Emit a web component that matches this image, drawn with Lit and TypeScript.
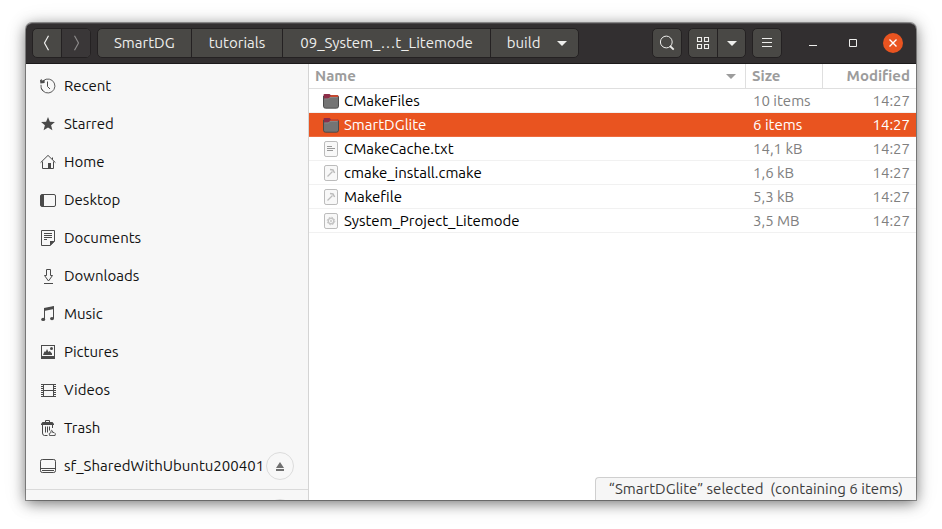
import { LitElement, html, css, svg, nothing } from "lit";
import { customElement } from "lit/decorators.js";
import { classMap } from "lit/directives/class-map.js";

const glyphs: Record<string, unknown> = {
  recent: svg`<path d="M3.2 2.8A7 7 0 1 1 1 6.8M1.3 10.2A7 7 0 0 0 3 13" fill="none" stroke="currentColor" stroke-width=".9"/><path d="M0 2.2 1.8 1v1.6L4.6 2v3L.4 5.4z" fill="currentColor"/><path d="M7.5 3.5v5L10 11" fill="none" stroke="currentColor"/>`,
  star: svg`<path d="M8 1l1.9 4.7 5 .4-3.8 3.2 1.3 4.9L8 11.5l-4.4 2.7 1.3-4.9L1.1 6.1l5-.4z" fill="currentColor"/>`,
  home: svg`<path d="M.6 8.6 8 1.4l7.4 7.2M2.5 7.5v7h11v-7M12.5 5.5v-2" fill="none" stroke="currentColor"/><path d="M8 9h3v6H8z" fill="currentColor"/>`,
  desktop: svg`<rect x=".5" y="2.5" width="15" height="12" rx="1.5" fill="none" stroke="currentColor"/><path d="M1 3h3v11H1z" fill="currentColor"/>`,
  documents: svg`<path d="M1.5.5h13v10.6l-4.4 4.4H1.5z" fill="none" stroke="currentColor"/><path d="M10 16v-5h5zM4 3h8v1H4zM4 5h8v1H4zM4 7h8v1H4zM4 9h3v1H4z" fill="currentColor"/>`,
  downloads: svg`<path d="M6.5 1.5h4v6h2L8.5 13 4.5 7.5h2zM4 15.5h9" fill="none" stroke="currentColor"/>`,
  music: svg`<path d="M4.5 13.3V3.2L13.5 1v11.6" fill="none" stroke="currentColor"/><path d="M4 2l10-2v3L4 5z" fill="currentColor"/><ellipse cx="3.2" cy="13.4" rx="2" ry="1.7" fill="currentColor"/><ellipse cx="12" cy="12.6" rx="2" ry="1.7" fill="currentColor"/>`,
  pictures: svg`<path d="M1 1h14v14H1zM2 2v10h12V2z" fill="currentColor" fill-rule="evenodd"/><path d="M3 11l1-2.5L5 7l.7 1L7 5l1.5 3 1.3-1L12 9.5V11z" fill="currentColor"/><circle cx="11.5" cy="4.5" r="1.5" fill="currentColor"/>`,
  videos: svg`<path d="M3.5 2v13M13.5 2v13M4 2.5h9M4 8.5h9M4 14.5h9" fill="none" stroke="currentColor"/><path d="M1.5 2v13M15.5 2v13" fill="none" stroke="currentColor" stroke-dasharray="1 1"/><path d="M2 2.5h1m-1 2h1m-1 2h1m-1 2h1m-1 2h1m-1 2h1m-1 2h1M14 2.5h1m-1 2h1m-1 2h1m-1 2h1m-1 2h1m-1 2h1m-1 2h1" stroke="currentColor"/>`,
  trash: svg`<path d="M5.5 2V.5h4V2M2.5 5v8q0 2.5 2 2.5h3M12.5 5v3" fill="none" stroke="currentColor"/><path d="M2.5 2h10L14 4v1H1V4z" fill="currentColor"/><path d="M5.5 6.5v6M7.5 6.5v6M9.5 6.5v4" stroke="currentColor"/><path d="M9.5 15.5h5.6q1-2-1-3h-1.4l-.2-1.5q-1-1.5-1.6 0l.2 1.5q-3 .6-1.6 3z" fill="none" stroke="currentColor" stroke-width=".9"/>`,
  drive: svg`<rect x=".5" y="1.5" width="15" height="13" rx="1.8" fill="none" stroke="currentColor"/><path d="M1 10.5h14M2 12.5h12" stroke="currentColor"/>`,
  eject: svg`<path d="M8 4l4 6H4zM4 11h8v2H4z" fill="currentColor"/>`,
  back: svg`<path d="M9.5.7 5.5 8l4 7.3" fill="none" stroke="currentColor" stroke-width="1.2"/>`,
  forward: svg`<path d="M6.5.7l4 7.3-4 7.3" fill="none" stroke="currentColor" stroke-width="1.2"/>`,
  caret: svg`<path d="M3 6h10l-5 5z" fill="currentColor"/>`,
  search: svg`<circle cx="7.3" cy="7" r="5.9" fill="none" stroke="currentColor"/><path d="M11 11l3.7 3.7" stroke="currentColor" stroke-width="1.8"/>`,
  grid: svg`<path d="M2.5 2.5h4v4h-4zM9.5 2.5h4v4h-4zM2.5 9.5h4v4h-4zM9.5 9.5h4v4h-4z" fill="none" stroke="currentColor" stroke-width="1.1"/>`,
  menu: svg`<path d="M3 3.5h10M3 7.5h10M3 11.5h10" stroke="currentColor"/>`,
  minimize: svg`<path d="M4 10.5h8" stroke="currentColor"/>`,
  maximize: svg`<path d="M4.5 4.5h7v7h-7z" fill="none" stroke="currentColor"/>`,
  close: svg`<path d="M4.5 4.5l7 7M11.5 4.5l-7 7" stroke="currentColor" stroke-width="1.4"/>`,
  folder: svg`<path d="M1.5 1h5l1.2 1H14q1.5 0 1.5 1.5V13H.5V2q0-1 1-1z" fill="#8d2e48"/><path d="M8 2h6q1.5 0 1.5 1.5V5H6z" fill="#c5482f"/><path d="M.5 5.5H5q1 0 2-1.5h8.5v9.3q0 1.7-1.7 1.7H2.2Q.5 15 .5 13.3z" fill="#747474"/><path d="M.5 3v10.2q0 2 2 2h11q2 0 2-2V3.5" fill="none" stroke="#4a4a4a"/><path d="M1.5 6H5q1 0 2-1.5h7.5" fill="none" stroke="#8e8e8e" stroke-width=".7"/>`,
  text: svg`<rect x="1.5" y=".5" width="13" height="15" rx="1.6" fill="#f8f8f8" stroke="#bbb"/><path d="M4 5.5h5M4 7.5h8M4 9.5h6" stroke="#999"/>`,
  script: svg`<rect x="1.5" y=".5" width="13" height="15" rx="1.6" fill="#f8f8f8" stroke="#bbb"/><path d="M4.5 11.5l5-5" stroke="#bbb" stroke-width="1.2"/><path d="M7 4.6l3 .4 1.6 3" fill="none" stroke="#bbb" stroke-width="1.5"/>`,
  program: svg`<rect x="1.5" y=".5" width="13" height="15" rx="1.6" fill="#f8f8f8" stroke="#bbb"/><circle cx="8" cy="8" r="2.8" fill="none" stroke="#c4c4c4" stroke-width="1.4"/><circle cx="8" cy="8" r="3.8" fill="none" stroke="#c4c4c4" stroke-dasharray="1.5 1.5"/><circle cx="8" cy="8" r="1" fill="#c4c4c4"/>`,
};

const icon = (name: string) =>
  html`<svg class="icon" viewBox="0 0 16 16" width="16" height="16" aria-hidden="true">${glyphs[name]}</svg>`;

const places = [
  ["recent", "Recent"],
  ["star", "Starred"],
  ["home", "Home"],
  ["desktop", "Desktop"],
  ["documents", "Documents"],
  ["downloads", "Downloads"],
  ["music", "Music"],
  ["pictures", "Pictures"],
  ["videos", "Videos"],
  ["trash", "Trash"],
];

const files = [
  { icon: "folder", name: "CMakeFiles", size: "10 items", modified: "14:27" },
  { icon: "folder", name: "SmartDGlite", size: "6 items", modified: "14:27", selected: true },
  { icon: "text", name: "CMakeCache.txt", size: "14,1 kB", modified: "14:27" },
  { icon: "script", name: "cmake_install.cmake", size: "1,6 kB", modified: "14:27" },
  { icon: "script", name: "Makefile", size: "5,3 kB", modified: "14:27" },
  { icon: "program", name: "System_Project_Litemode", size: "3,5 MB", modified: "14:27" },
];

const reset = css`
  :host, * { box-sizing: border-box; }
  button { font: inherit; color: inherit; background: none; border: 0; padding: 0; margin: 0; }
  a { color: inherit; text-decoration: none; }
  .icon { display: block; flex: none; }
`;

@customElement("files-header")
export class FilesHeader extends LitElement {
  static styles = [reset, css`
    :host {
      display: flex; align-items: center; flex: none; height: 41px; padding: 0 13px 1px 6px;
      background: #322f30; color: #eeeeec; border-top: 1px solid #4b484a; border-bottom: 1px solid #1c1a1b;
      border-radius: 6px 6px 0 0;
    }
    .group { display: flex; height: 30px; border: 1px solid #242122; border-radius: 5px; background: #494845; overflow: hidden; }
    .group > * { display: flex; align-items: center; justify-content: center; min-width: 28px; height: 28px; }
    .group > * + * { border-left: 1px solid #242122; }
    .group > .off { min-width: 29px; background: #3a3738; color: #8b8989; }
    .path { margin-left: 6px; }
    .crumb { padding: 0 16px; white-space: nowrap; }
    .crumb + .crumb { padding: 0 17px; }
    .crumb + .last { gap: 14px; padding: 0 8px 0 16px; }
    .tools { display: flex; gap: 6px; margin-left: auto; }
    .controls { display: flex; align-items: center; gap: 20px; margin-left: 21px; }
    .controls button { display: flex; align-items: center; justify-content: center; width: 20px; height: 20px; border-radius: 50%; }
    .controls .close { background: #e95420; color: #fff; }
  `];
  render() {
    return html`
      <div class="group">
        <button aria-label="Back">${icon("back")}</button>
        <button class="off" disabled aria-label="Forward">${icon("forward")}</button>
      </div>
      <nav class="group path" aria-label="Path">
        <button class="crumb">SmartDG</button>
        <button class="crumb">tutorials</button>
        <button class="crumb">09_System_…t_Litemode</button>
        <button class="crumb last">build ${icon("caret")}</button>
      </nav>
      <div class="tools">
        <div class="group"><button aria-label="Search">${icon("search")}</button></div>
        <div class="group">
          <button aria-label="Grid view">${icon("grid")}</button>
          <button aria-label="View options">${icon("caret")}</button>
        </div>
        <div class="group"><button aria-label="Menu">${icon("menu")}</button></div>
      </div>
      <div class="controls">
        <button aria-label="Minimize">${icon("minimize")}</button>
        <button aria-label="Maximize">${icon("maximize")}</button>
        <button class="close" aria-label="Close">${icon("close")}</button>
      </div>
    `;
  }
}

@customElement("files-sidebar")
export class FilesSidebar extends LitElement {
  static styles = [reset, css`
    :host { display: block; flex: none; width: 283px; padding-top: 3px; background: #f7f7f7; border-right: 1px solid #d4d4d4; overflow: hidden; }
    .row { display: flex; align-items: center; height: 38px; padding: 0 14px; }
    .place { display: flex; align-items: center; gap: 8px; color: #111; white-space: nowrap; }
    .place .icon { color: #4a4a4a; }
    .eject { display: flex; align-items: center; justify-content: center; flex: none; width: 28px; height: 28px; margin-left: auto; border: 1px solid #dcdcdc; border-radius: 50%; color: #707070; }
    .rule { height: 1px; margin: 4px 0; border: 0; background: #dadada; }
  `];
  private place(name: string, label: string, ejectable = false) {
    return html`<div class="row">
      <a class="place" href="#">${icon(name)}${label}</a>
      ${ejectable ? html`<button class="eject" aria-label="Eject">${icon("eject")}</button>` : nothing}
    </div>`;
  }
  render() {
    return html`
      ${places.map(([name, label]) => this.place(name, label))}
      ${this.place("drive", "sf_SharedWithUbuntu200401", true)}
      <hr class="rule">
      <div class="row"><button class="eject" aria-label="Eject"></button></div>
    `;
  }
}

@customElement("files-list")
export class FilesList extends LitElement {
  static styles = [reset, css`
    :host { display: block; position: relative; flex: 1; min-width: 0; background: #fff; overflow: hidden; }
    table { width: 100%; table-layout: fixed; border-collapse: separate; border-spacing: 0; }
    th, td { height: 24px; padding: 0 6px; line-height: 20px; text-align: left; white-space: nowrap; }
    th { height: 25px; color: #9c9c9c; font-weight: 700; border-bottom: 1px solid #dfdfdf; }
    th + th { border-left: 1px solid #dfdfdf; }
    td { color: #808080; border-bottom: 1px solid #f1f1f1; }
    td:nth-child(2) { padding-left: 8px; }
    td:first-child { padding-left: 14px; color: #000; }
    th:last-child, td:last-child { text-align: right; }
    .size { width: 77px; }
    .modified { width: 94px; }
    .cell { display: flex; align-items: center; gap: 5px; }
    .sort { justify-content: space-between; }
    tbody .selected td { color: #fff; background: #e95420; border-color: #ee6c3f; }
    .status {
      position: absolute; right: 0; bottom: 0; height: 23px; padding: 0 13px; line-height: 22px;
      color: #3d3d3d; background: #f6f6f6; border: 1px solid #cfcfcf; border-width: 1px 0 0 1px;
      border-top-left-radius: 4px; white-space: pre;
    }
  `];
  render() {
    return html`
      <table>
        <colgroup><col><col class="size"><col class="modified"></colgroup>
        <thead>
          <tr><th><div class="cell sort">Name ${icon("caret")}</div></th><th>Size</th><th>Modified</th></tr>
        </thead>
        <tbody>
          ${files.map((f) => html`<tr class=${classMap({ selected: !!f.selected })}>
            <td><div class="cell">${icon(f.icon)}${f.name}</div></td><td>${f.size}</td><td>${f.modified}</td>
          </tr>`)}
        </tbody>
      </table>
      <div class="status" role="status">“SmartDGlite” selected  (containing 6 items)</div>
    `;
  }
}

@customElement("app-root")
export class AppRoot extends LitElement {
  static styles = css`
    :host {
      display: flex; box-sizing: border-box; height: 100vh; padding: 23px 26px 29px; background: #fff; overflow: hidden;
      font: 15px/20px Ubuntu, "Noto Sans", "Open Sans", sans-serif;
    }
    .window {
      display: flex; flex-direction: column; flex: 1; min-width: 0; border-radius: 6px 6px 0 0;
      box-shadow: 0 0 0 1px rgba(0, 0, 0, 0.35), 0 3px 14px rgba(0, 0, 0, 0.5), 0 2px 24px rgba(0, 0, 0, 0.12);
    }
    .body { display: flex; flex: 1; min-height: 0; }
  `;
  render() {
    return html`<main class="window">
      <files-header></files-header>
      <div class="body">
        <files-sidebar></files-sidebar>
        <files-list></files-list>
      </div>
    </main>`;
  }
}
